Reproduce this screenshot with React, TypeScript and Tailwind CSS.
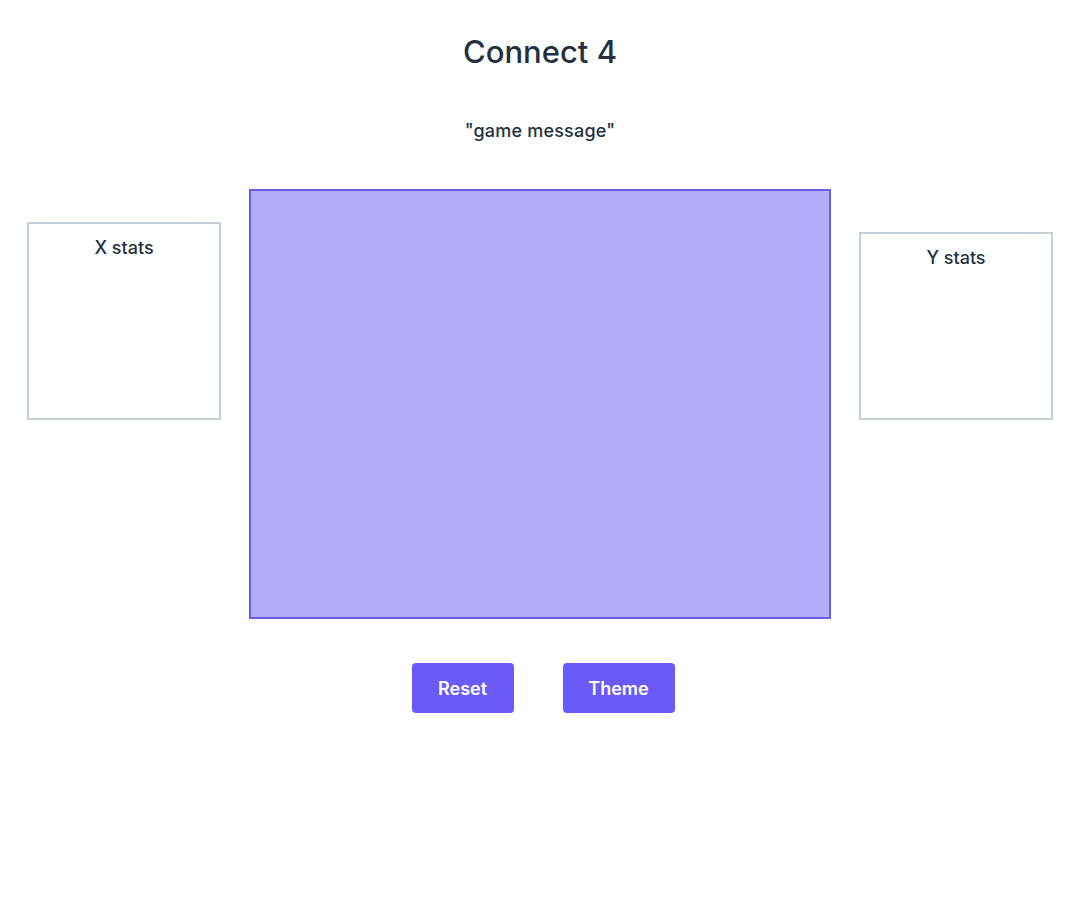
import { ReactNode } from 'react';

function StatsBox({ label, className }: { label: string; className?: string }) {
  return (
    <div className={`w-[194px] border-2 border-[#c3cfd9] bg-white flex flex-col items-center pt-[11px] ${className ?? ''}`}>
      <span className="text-[18px] leading-[26px] font-medium text-[#23313f]">{label}</span>
    </div>
  );
}

function Button({ children, width }: { children: ReactNode; width: string }) {
  return (
    <button className={`${width} h-[50px] rounded-[4px] bg-[#6a5af9] text-white text-[18px] font-semibold flex items-center justify-center`}>
      {children}
    </button>
  );
}

export default function App() {
  return (
    <div className="min-h-[924px] bg-white flex flex-col items-center font-['Inter','Liberation_Sans',sans-serif]">
      <h1 className="mt-[28px] text-[31px] leading-[48px] font-medium text-[#23313f]">Connect 4</h1>

      <p className="mt-[43px] text-[18px] leading-[24px] font-medium tracking-[0.2px] text-[#23313f]">"game message"</p>

      <div className="mt-[46px] flex items-start gap-[28px]">
        <StatsBox label="X stats" className="mt-[33px] h-[198px]" />
        <div className="w-[582px] h-[430px] border-2 border-[#6c5cf0] bg-[#b3adf9]" />
        <StatsBox label="Y stats" className="mt-[43px] h-[188px]" />
      </div>

      <div className="mt-[44px] ml-[6px] flex gap-[49px]">
        <Button width="w-[102px]">Reset</Button>
        <Button width="w-[112px]">Theme</Button>
      </div>
    </div>
  );
}
